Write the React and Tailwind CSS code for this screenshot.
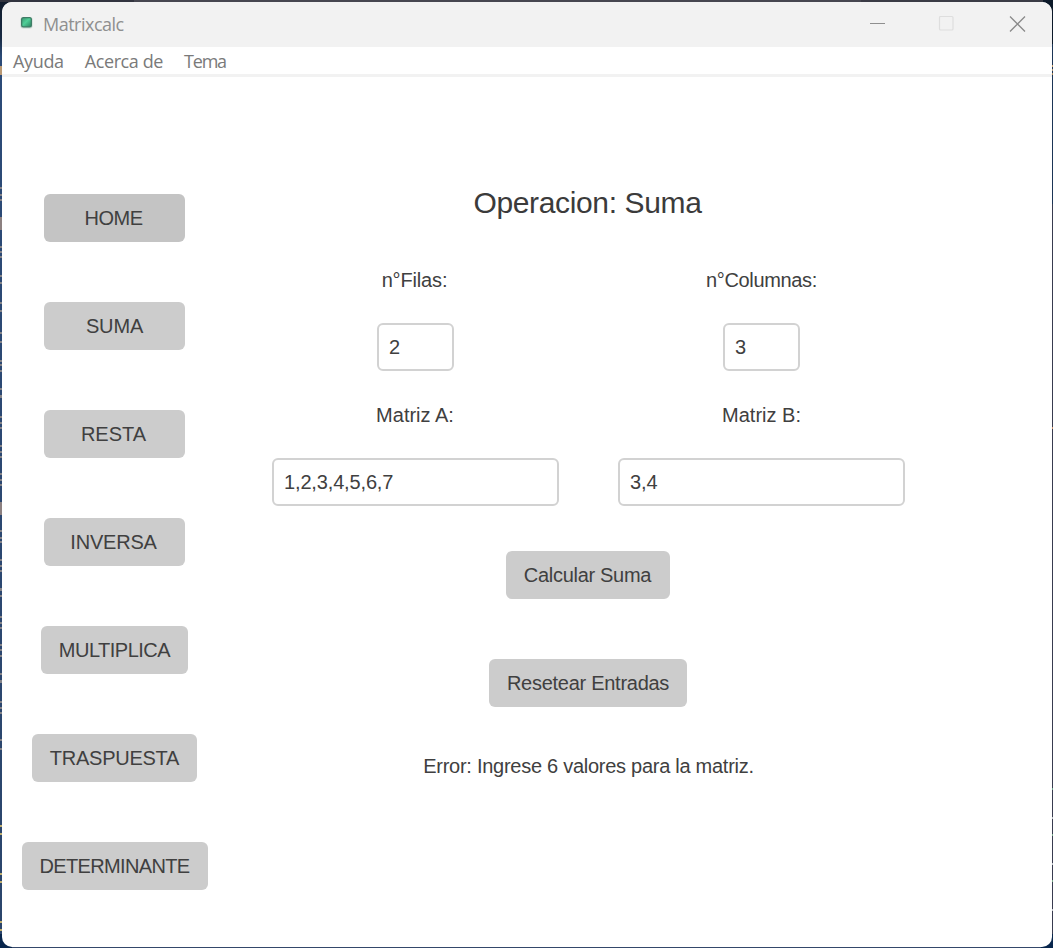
import React from "react";

const operations = [
  { label: "HOME", box: "w-[141px] bg-[#c4c4c4]", text: "tracking-[-0.5px] pr-[2px]" },
  { label: "SUMA", box: "w-[141px] bg-[#cccccc]", text: "tracking-[-0.15px]" },
  { label: "RESTA", box: "w-[141px] bg-[#cccccc]", text: "tracking-[0px] pr-[2px]" },
  { label: "INVERSA", box: "w-[141px] bg-[#cccccc]", text: "tracking-[-0.2px] pr-[2px]" },
  { label: "MULTIPLICA", box: "w-[147px] bg-[#cccccc]", text: "tracking-[-0.5px]" },
  { label: "TRASPUESTA", box: "w-[165px] bg-[#cccccc]", text: "tracking-[-0.25px]" },
  { label: "DETERMINANTE", box: "w-[186px] bg-[#cccccc]", text: "tracking-[-0.65px]" },
];

const leftMarks = [
  [187, 2], [194, 2], [199, 2], [246, 2], [251, 2], [256, 2], [275, 2], [282, 2], [302, 2], [310, 2], [332, 2], [341, 2],
  [360, 2], [364, 2], [370, 2], [388, 2], [395, 3], [416, 2], [422, 2], [427, 2], [445, 2], [451, 2], [456, 2],
  [473, 2], [479, 2], [484, 2], [530, 2], [537, 2], [541, 2], [559, 2], [565, 2], [570, 2], [588, 3], [595, 2],
  [616, 2], [622, 2], [627, 2], [644, 2], [649, 2], [655, 2], [673, 2], [680, 3], [701, 2], [707, 2], [712, 2], [739, 2], [748, 2],
];

const goldMarks = [825, 833, 873, 881, 921, 929];

const rightMarks = [
  [65, "#c49a69"], [69, "#a99370"], [73, "#a98556"], [427, "#cd9670"], [788, "#6aa38b"], [817, "#b9bec4"],
  [834, "#79ab8c"], [863, "#b9bec4"], [880, "#79ab8c"], [909, "#b9bec4"],
];

function Backdrop() {
  return (
    <svg className="absolute inset-0" width="1053" height="948" shapeRendering="crispEdges">
      <defs>
        <linearGradient id="edge" x1="0" y1="0" x2="0" y2="1">
          <stop offset="0" stopColor="#101b2b" />
          <stop offset="0.04" stopColor="#182a43" />
          <stop offset="0.06" stopColor="#2c4b78" />
          <stop offset="1" stopColor="#2b456b" />
        </linearGradient>
      </defs>
      <rect width="1053" height="948" fill="#383b4f" />
      <rect width="12" height="948" fill="url(#edge)" />
      <rect width="134" height="2" fill="#32343f" />
      <rect x="134" width="727" height="2" fill="#464650" />
      <rect x="861" width="182" height="2" fill="#3a3b45" />
      <rect x="1043" width="10" height="44" fill="#0c1929" />
      <rect x="1052" y="44" width="1" height="160" fill="#1b3556" />
      <rect y="946" width="1053" height="2" fill="#34486a" />
      <rect y="934" width="12" height="14" fill="#08264c" />
      <rect x="1041" y="934" width="12" height="14" fill="#08264c" />
      <rect y="66" width="2" height="9" fill="#b99872" />
      <rect y="217" width="2" height="13" fill="#8c8080" />
      <rect y="502" width="2" height="13" fill="#8c8080" />
      {leftMarks.map(([y, h]) => (
        <rect key={y} y={y} width="2" height={h} fill="#858489" />
      ))}
      {goldMarks.map((y) => (
        <rect key={y} y={y} width="2" height="2" fill="#bfae6e" />
      ))}
      {rightMarks.map(([y, fill]) => (
        <rect key={y} x="1052" y={y} width="1" height="2" fill={fill} />
      ))}
    </svg>
  );
}

function TitleBar() {
  return (
    <header className="flex h-[45px] shrink-0 items-center bg-[#f2f2f2] pb-[2px]">
      <svg className="ml-[18px] mt-[-3px]" width="13" height="13" viewBox="0 0 13 13">
        <defs>
          <linearGradient id="gem" x1="0" y1="0" x2="1" y2="1">
            <stop offset="0" stopColor="#3f9c76" />
            <stop offset="0.45" stopColor="#4fcf97" />
            <stop offset="1" stopColor="#2f8a65" />
          </linearGradient>
        </defs>
        <rect x="0.5" y="1" width="12" height="11.5" rx="2.5" fill="#c6d5ce" />
        <rect x="1" y="1" width="11" height="10.5" rx="2.5" fill="#3f7d66" />
        <rect x="2.3" y="2.3" width="8.4" height="7.9" rx="1.2" fill="url(#gem)" />
      </svg>
      <span className="ml-[10px] text-[18px] leading-[24px] text-[#8f8f8f] font-['Open_Sans',sans-serif] tracking-[-0.5px]">
        Matrixcalc
      </span>
      <svg className="ml-auto mr-[26px]" width="160" height="18" viewBox="0 0 160 18" fill="none">
        <path d="M4 8.5H19" stroke="#8f8f8f" strokeWidth="1" />
        <rect x="73.5" y="1.5" width="13.5" height="13.5" rx="1" stroke="#dedede" strokeWidth="1.2" />
        <path d="M144 1.5L159 16.5M159 1.5L144 16.5" stroke="#8a8a8a" strokeWidth="1.3" />
      </svg>
    </header>
  );
}

function MenuBar() {
  return (
    <nav className="flex h-[30px] shrink-0 items-center gap-[21px] border-b-[3px] border-[#f2f2f2] pl-[11px] text-[18px] leading-[24px] text-[#7a7a7a] font-['Open_Sans',sans-serif]">
      <span className="tracking-[-0.35px]">Ayuda</span>
      <span className="tracking-[-0.4px]">Acerca de</span>
      <span className="tracking-[-1.2px]">Tema</span>
    </nav>
  );
}

function Field({ label, value, width, spacing }) {
  return (
    <label className="flex flex-col items-center">
      <span className={`h-[24px] leading-[24px] ${spacing}`}>{label}</span>
      <input
        readOnly
        value={value}
        className={`mt-[31px] h-[48px] rounded-[6px] border-2 border-[#d2d2d2] bg-white pl-[10px] tracking-[-0.15px] outline-none ${width}`}
      />
    </label>
  );
}

export default function App() {
  return (
    <div className="relative h-[948px] w-[1053px] overflow-hidden pl-[2px] pt-[2px] text-[20px] text-[#404040] font-['Liberation_Sans',Arial,sans-serif]">
      <Backdrop />
      <div className="relative flex h-[945px] w-[1050px] flex-col overflow-hidden rounded-[10px] bg-white">
        <TitleBar />
        <MenuBar />
        <div className="flex flex-1">
          <aside className="flex w-[225px] flex-col items-center gap-[60px] pt-[117px]">
            {operations.map((op) => (
              <button
                key={op.label}
                className={`flex h-[48px] shrink-0 items-center justify-center rounded-[6px] ${op.box}`}
              >
                <span className={op.text}>{op.label}</span>
              </button>
            ))}
          </aside>
          <main className="ml-[45px] flex w-[633px] flex-col items-center pt-[108px]">
            <h1 className="pr-[2px] text-[30px] leading-[36px] tracking-[-0.35px] text-[#3b3b3b]">Operacion: Suma</h1>
            <div className="mt-[47px] grid w-full grid-cols-[287px_287px] justify-between gap-y-[32px]">
              <Field label="n°Filas:" value="2" width="w-[77px]" spacing="tracking-[-0.15px] pr-[2px]" />
              <Field label="n°Columnas:" value="3" width="w-[77px]" spacing="tracking-[-0.35px]" />
              <Field label="Matriz A:" value="1,2,3,4,5,6,7" width="w-[287px]" spacing="pr-[1px]" />
              <Field label="Matriz B:" value="3,4" width="w-[287px]" spacing="tracking-normal" />
            </div>
            <button className="mr-[2px] mt-[45px] h-[48px] w-[164px] shrink-0 rounded-[6px] bg-[#cccccc] tracking-[-0.3px]">
              Calcular Suma
            </button>
            <button className="mr-[1px] mt-[60px] h-[48px] w-[198px] shrink-0 rounded-[6px] bg-[#cccccc] tracking-[-0.27px]">
              Resetear Entradas
            </button>
            <p className="mt-[47px] leading-[24px] tracking-[-0.27px]">Error: Ingrese 6 valores para la matriz.</p>
          </main>
        </div>
      </div>
    </div>
  );
}
